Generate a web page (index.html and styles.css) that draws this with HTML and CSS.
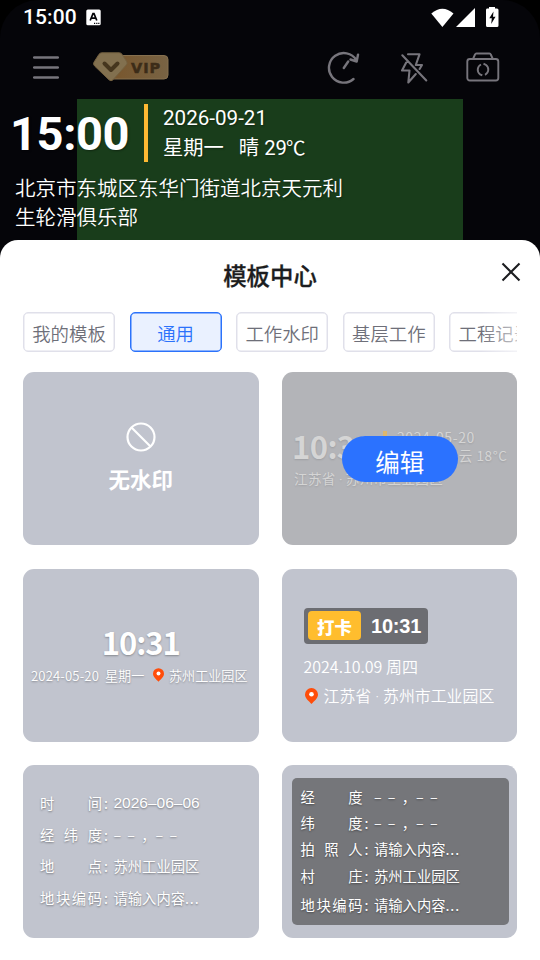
FILE: index.html
```html
<!DOCTYPE html>
<html lang="zh-CN">
<head>
<meta charset="utf-8">
<title>模板中心</title>
<link rel="stylesheet" href="styles.css">
</head>
<body>
<div class="phone">
  <div class="camera">
    <div class="preview"></div>
    <header class="status">
      <span class="clock">15:00</span>
      <svg class="ime" width="15" height="17" viewBox="0 0 15 17"><rect x=".3" y=".5" width="14.4" height="15.8" rx="1.6" fill="#fff"/><path d="M4.2 11.5 7 4.6h1l2.8 6.900M5.300 9.200h4.400" fill="none" stroke="#050509" stroke-width="1.700"/><path d="M8 14.300h1.200M10.200 14.300h1.200M12.200 14.300h1.200" stroke="#050509" stroke-width="1.200"/></svg>
      <svg class="signals" width="68" height="22" viewBox="0 0 68 22"><path d="M.3 6.500Q11.400-3.200 22.500 6.500L11.400 20z" fill="#fff"/><path d="M25 20 44 1v19z" fill="#fff"/><path d="M56 1.500h2V0h6v1.500h2q1.500 0 1.500 1.500v15.500q0 1.500-1.500 1.500H56.500Q55 20 55 18.500V3q0-1.500 1-1.500z" fill="#fff"/><path d="M62.500 4.500 58.300 11.300h2.500L60.200 17 64.500 9.800H62z" fill="#050509"/></svg>
    </header>
    <nav class="tools">
      <svg class="menu" width="26" height="26" viewBox="0 0 26 26"><path d="M1.200 2.500h23.600M1.200 12.500h23.600M1.200 22.500h23.600" stroke="#77757c" stroke-width="2.600" stroke-linecap="round"/></svg>
      <div class="vip">
        <svg width="76" height="30" viewBox="0 0 76 30">
          <defs><linearGradient id="gold" x1="0" x2="1"><stop offset="0" stop-color="#79562c"/><stop offset="1" stop-color="#786344"/></linearGradient></defs>
          <rect x="17" y="3.500" width="58" height="23.500" rx="4" fill="url(#gold)" stroke="#86704f"/>
          <path d="M9 .8h17q2 0 3 1.500l4.500 7q1.500 2-.5 4L20 27.800q-2 2-4 0L1.600 14q-1.800-2-.5-4L6 2.300Q7 .8 9 .8z" fill="#82704f" stroke="#746141"/>
          <path d="m11.500 11.500 6.500 6.500 6.500-6.500" fill="none" stroke="#46361e" stroke-width="4" stroke-linecap="round" stroke-linejoin="round"/>
        </svg>
        <span class="vip-text">VIP</span>
      </div>
      <svg class="timer" width="34" height="34" viewBox="0 0 34 34" fill="none" stroke="#77757c" stroke-width="2.400" stroke-linecap="round" stroke-linejoin="round"><path d="M26.500 28A14.800 14.800 0 1 1 29.300 9M31 3.700 29.700 10.500 23.500 8.500M16.800 17 21.200 10.500"/></svg>
      <svg class="flash" width="28" height="32" viewBox="0 0 28 32" fill="none" stroke="#77757c" stroke-width="2.100" stroke-linecap="round" stroke-linejoin="round"><path d="M2.300 3.300 26.300 28.500M8 2.300h11.500L15.800 13H22l-2.400 4M6.200 10.500 2 18.500h7.500L8.300 30.500 15.800 22"/></svg>
      <svg class="flip" width="34" height="30" viewBox="0 0 34 30" fill="none" stroke="#77757c" stroke-width="1.900" stroke-linejoin="round"><rect x="1.300" y="7" width="31" height="21.500" rx="2.500"/><path d="M7 7l2-4.500q.4-1 1.400-1h13q1 0 1.400 1l2 4.500"/><path d="M15 12.500A5.800 5.800 0 0 0 14 22.300L16.300 23.400M17.500 11.700l2.300 1.100A5.800 5.800 0 0 1 19 22.800" /></svg>
    </nav>
    <section class="stamp">
      <div class="stamp-top">
        <span class="stamp-time">15:00</span>
        <i class="stamp-bar"></i>
        <div class="stamp-info"><div>2026-09-21</div><div class="weather"><span>星期一</span><span>晴 29<small>℃</small></span></div></div>
      </div>
      <p class="stamp-place">北京市东城区东华门街道北京天元利<br>生轮滑俱乐部</p>
    </section>
  </div>
  <main class="sheet">
    <div class="sheet-head">
      <h1>模板中心</h1>
      <svg class="close" width="20" height="20" viewBox="0 0 20 20"><path d="m1.500 1.500 17 17m0-17-17 17" stroke="#1c1d20" stroke-width="2.100"/></svg>
    </div>
    <div class="tabs">
      <span class="tab">我的模板</span><span class="tab active">通用</span><span class="tab">工作水印</span><span class="tab">基层工作</span><span class="tab">工程记录</span>
    </div>
    <div class="grid">
      <article class="card none">
        <svg width="30" height="30" viewBox="0 0 30 30" fill="none" stroke="#fff" stroke-width="2.200"><circle cx="15" cy="15" r="13.500"/><path d="m5.500 5.500 19 19"/></svg>
        <b>无水印</b>
      </article>
      <article class="card selected">
        <div class="faded">
          <div class="faded-top"><span class="big">10:31</span><i></i><div class="faded-info"><div>2024-05-20</div><div class="right">多云 18°C</div></div></div>
          <div class="faded-place">江苏省<span class="dot">·</span>苏州市工业园区</div>
        </div>
        <span class="edit">编辑</span>
      </article>
      <article class="card simple">
        <div class="big">10:31</div>
        <div class="simple-line"><span class="d">2024-05-20</span><span class="w">星期一</span><svg width="11" height="14" viewBox="0 0 13 16"><path d="M6.500 0A6.500 6.500 0 0 1 13 6.500C13 10.500 9 13 6.500 16 4 13 0 10.500 0 6.500A6.500 6.500 0 0 1 6.500 0z" fill="#ff4d0a"/><circle cx="6.500" cy="6.300" r="2.300" fill="#fff"/></svg><span>苏州工业园区</span></div>
      </article>
      <article class="card punch">
        <div class="badge"><b class="yellow">打卡</b><b class="punch-time">10:31</b></div>
        <div class="punch-date">2024.10.09 周四</div>
        <div class="punch-place"><svg width="13" height="16" viewBox="0 0 13 16"><path d="M6.500 0A6.500 6.500 0 0 1 13 6.500C13 10.500 9 13 6.500 16 4 13 0 10.500 0 6.500A6.500 6.500 0 0 1 6.500 0z" fill="#ff4d0a"/><circle cx="6.500" cy="6.300" r="2.300" fill="#fff"/></svg><span>江苏省<span class="dot">·</span>苏州市工业园区</span></div>
      </article>
      <article class="card fields">
        <div class="row"><span class="label">时 间</span><span class="colon">:</span><span class="num">2026–06–06</span></div>
        <div class="row"><span class="label">经 纬 度</span><span class="colon">:</span><span class="dash">– – ，– –</span></div>
        <div class="row"><span class="label">地 点</span><span class="colon">:</span><span>苏州工业园区</span></div>
        <div class="row"><span class="label">地 块 编 码</span><span class="colon">:</span><span>请输入内容<span class="more">...</span></span></div>
      </article>
      <article class="card boxed">
        <div class="panel">
          <div class="row"><span class="label">经 度</span><span class="colon"></span><span class="dash">– – ，– –</span></div>
          <div class="row"><span class="label">纬 度</span><span class="colon">:</span><span class="dash">– – ，– –</span></div>
          <div class="row"><span class="label">拍 照 人</span><span class="colon">:</span><span>请输入内容<span class="more">...</span></span></div>
          <div class="row"><span class="label">村 庄</span><span class="colon">:</span><span>苏州工业园区</span></div>
          <div class="row last"><span class="label">地 块 编 码</span><span class="colon">:</span><span>请输入内容<span class="more">...</span></span></div>
        </div>
      </article>
    </div>
  </main>
</div>
</body>
</html>
```
FILE: styles.css
```css
* { box-sizing: border-box; }
body { margin: 0; background: #000; font-family: "Noto Sans CJK SC", sans-serif; }
svg { display: block; flex: none; }
.phone { width: 540px; height: 960px; overflow: hidden; border-radius: 38px 38px 0 0; background: #050509; white-space: nowrap; }
.camera { position: relative; height: 240px; color: #fff; }
.preview { position: absolute; left: 77px; top: 99px; width: 386px; height: 160px; background: #193d1b; }

.status { display: flex; height: 34px; padding-left: 23px; }
.clock { width: 63px; font: 500 21px/34px Roboto, sans-serif; letter-spacing: .1px; }
.ime { margin-top: 9px; }
.signals { margin: 7px 0 0 330px; }

.tools { display: flex; height: 65px; padding-left: 33px; }
.menu { margin-top: 21px; }
.vip { position: relative; margin: 18px 0 0 34px; }
.vip-text { position: absolute; left: 38px; top: 5px; font: 700 14.500px/22px "DejaVu Sans", sans-serif; letter-spacing: 1px; color: #3c2c18; -webkit-text-stroke: .5px #3c2c18; }
.timer { margin: 17px 0 0 158px; }
.flash { margin: 18px 0 0 39px; }
.flip { margin: 18px 0 0 37.500px; }

.stamp { position: relative; padding: 5px 0 0 10px; text-shadow: 1px 1px 2px rgba(0, 0, 0, .35); }
.stamp-top { display: flex; height: 58px; }
.stamp-time { width: 134px; font: 700 47px/60px Roboto, sans-serif; letter-spacing: -.4px; }
.stamp-bar { width: 4px; height: 58px; background: #fdb933; }
.stamp-info { margin-left: 15px; font: 20.600px/29px Roboto, "Noto Sans CJK SC", sans-serif; }
.weather { display: flex; gap: 15px; font-size: 20.300px; line-height: 31px; }
.weather small { margin-left: -1px; font-size: 19.500px; }
.stamp-place { margin: 11px 0 0 5px; font-size: 20.500px; line-height: 29px; font-weight: 350; }

.sheet { position: relative; height: 720px; background: #fff; border-radius: 18px 18px 0 0; padding: 0 23px; }
.sheet-head { position: relative; height: 72px; }
h1 { margin: 0; text-align: center; font-size: 23.400px; line-height: 70px; font-weight: 500; color: #1c1d20; -webkit-text-stroke: .3px #1c1d20; }
.close { position: absolute; right: -4px; top: 22px; }
.tabs { position: relative; display: flex; gap: 14.600px; width: 494px; height: 41px; overflow: hidden; }
.tabs::after { content: ""; position: absolute; right: 0; top: 0; width: 36px; height: 41px; background: linear-gradient(90deg, rgba(255, 255, 255, 0), rgba(255, 255, 255, .6)); }
.tab { flex: none; width: 92px; height: 40px; border: 1px solid #e0e0ea; border-radius: 5px; text-align: center; font-size: 18.400px; font-weight: 350; line-height: 40px; color: #6e6f79; box-shadow: inset 0 0 0 .5px #e0e0ea; }
.tab.active { border-color: #2b72fb; background: #eaf1ff; color: #2b72fb; box-shadow: inset 0 0 0 .5px #2b72fb; }

.grid { display: grid; grid-template-columns: 235.500px 235px; grid-auto-rows: 173px; gap: 23.500px; margin-top: 19px; }
.card { position: relative; border-radius: 11px; background: #c1c4ce; color: #fff; overflow: hidden; }
.none { display: flex; flex-direction: column; align-items: center; padding-top: 50px; }
.none b { font-size: 21.500px; line-height: 30px; margin-top: 12px; font-weight: 700; }

.selected { background: #b3b4b8; padding: 55px 0 0 10px; color: #d5d5d5; }
.faded { text-shadow: 0 1px 2px rgba(0, 0, 0, .12); }
.faded-top { display: flex; height: 38px; }
.big { font-size: 31px; line-height: 38px; font-weight: 700; letter-spacing: -1px; }
.faded-top .big { width: 91px; letter-spacing: -.6px; }
.faded-top i { width: 4px; height: 34px; margin-top: 4px; background: #deb76c; }
.faded-info { width: 110.500px; margin: 1px 0 0 10px; font-size: 14px; line-height: 18px; letter-spacing: .6px; }
.faded-info .right { text-align: right; font-size: 13.500px; }
.faded-place { margin: 3px 0 0 2px; font-size: 13.500px; line-height: 20px; letter-spacing: .4px; }
.dot { display: inline-block; width: .65em; margin: 0 .05em; text-align: center; font-family: Roboto, sans-serif; letter-spacing: 0; }
.edit { position: absolute; left: 60px; top: 63.500px; width: 115.500px; height: 46px; border-radius: 23px; background: #2b72ff; color: #fff; text-align: center; font-size: 24.500px; line-height: 52px; }

.simple { padding-top: 53px; text-align: center; text-shadow: 0 1px 2px rgba(0, 0, 0, .3); }
.simple .big { line-height: 40px; }
.simple-line { display: flex; margin: 4px 0 0 8px; font-size: 13.100px; line-height: 20px; font-weight: 350; }
.simple-line .d { width: 74px; text-align: left; letter-spacing: .15px; }
.simple-line .w { width: 49px; text-align: left; }
.simple-line svg { margin: 2px 5px 0 -1px; }

.punch { padding: 39px 0 0 21.500px; }
.badge { display: flex; width: 124px; height: 36.500px; padding: 3.500px 0 0 4.500px; border-radius: 4px; background: #6c6d72; }
.yellow { width: 53px; height: 29px; border-radius: 4px; background: #ffbd2e; text-align: center; font-size: 17.400px; line-height: 32px; font-weight: 900; }
.punch-time { margin-left: 10px; font: 700 20px/31px "Liberation Sans", sans-serif; letter-spacing: -.2px; }
.punch-date { margin-top: 10px; font-size: 16px; line-height: 24px; font-weight: 350; }
.punch-place { display: flex; gap: 6px; margin-top: 5px; padding-left: 1px; font-size: 15.900px; line-height: 26px; font-weight: 350; }
.punch-place svg { margin-top: 4.500px; }

.row { display: flex; height: 31.700px; font-size: 14.300px; line-height: 22px; text-shadow: 0 1px 2px rgba(0, 0, 0, .4); }
.label { width: 62px; text-align-last: justify; word-spacing: -4px; }
.colon { width: 11.500px; padding-left: 2px; }
.num { font: 15.500px/22px "Liberation Sans", sans-serif; }
.dash { word-spacing: 3px; }
.more { letter-spacing: .9px; }
.fields { padding: 27px 0 0 17px; }
.boxed { padding: 13px 8.500px 0 10px; }
.panel { height: 147px; padding: 8px 0 0 8.500px; border-radius: 5px; background: #75767a; }
.panel .row { height: 26.200px; }
.panel .last { margin-top: 3.300px; }
```
